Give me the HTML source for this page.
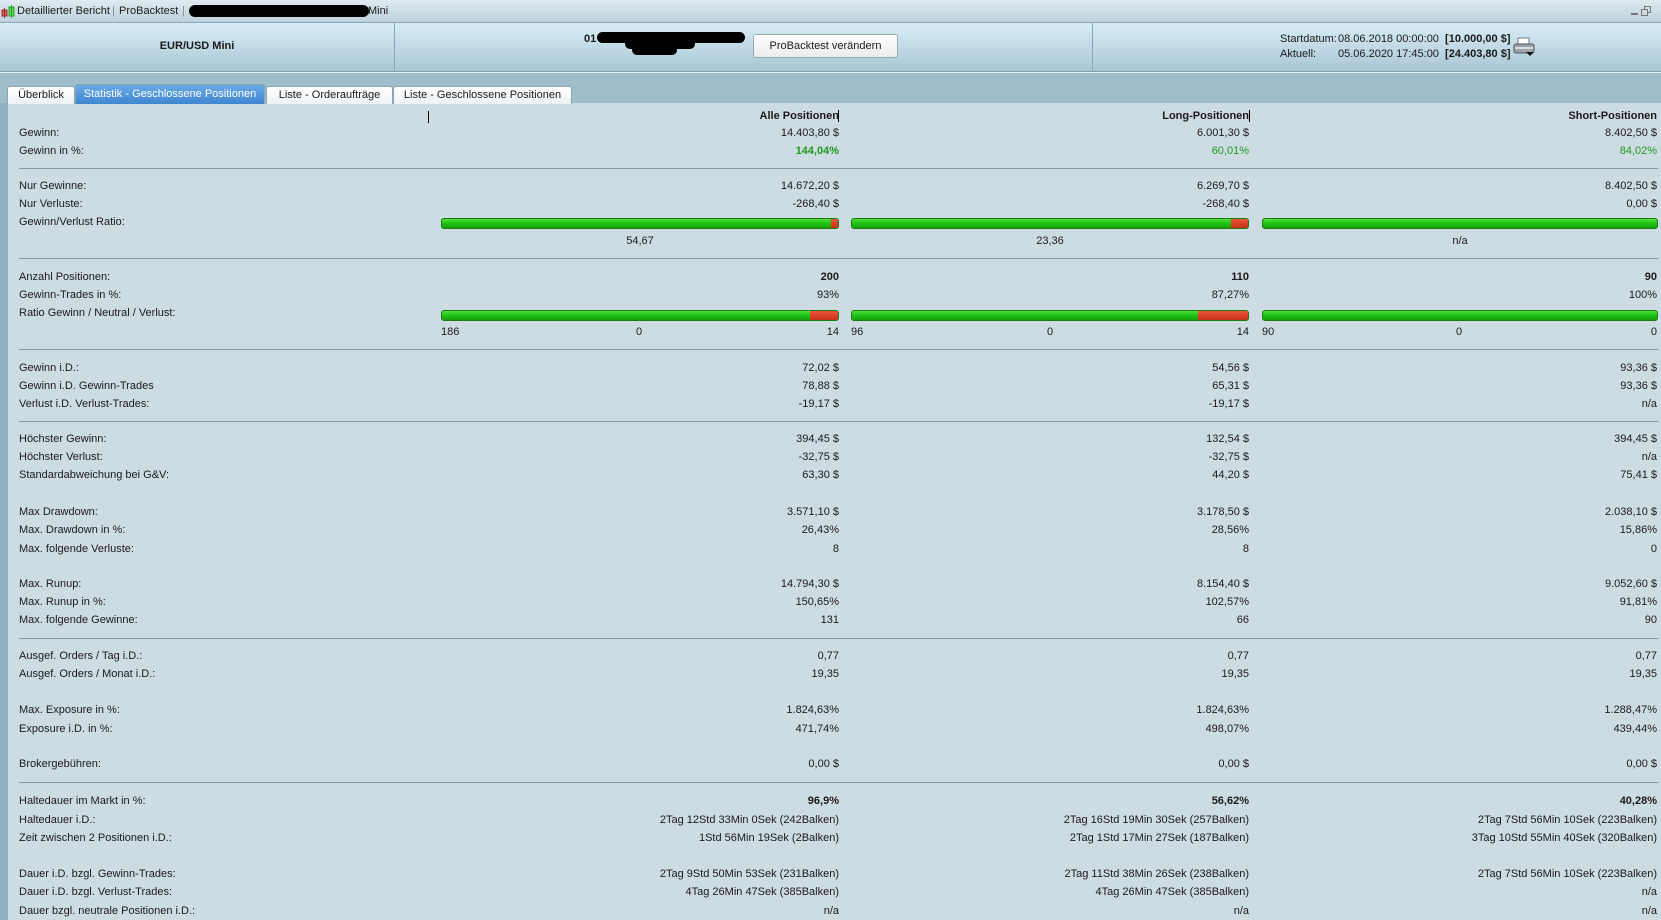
<!DOCTYPE html>
<html><head><meta charset="utf-8">
<style>
*{margin:0;padding:0;box-sizing:border-box}
body{width:1661px;height:920px;overflow:hidden;font-family:"Liberation Sans",Arial,sans-serif;font-size:11px;color:#1a1a1a;background:#cddce3;position:relative}
.abs{position:absolute}
#title{left:0;top:0;width:1661px;height:23px;background:linear-gradient(#dfeaf0,#bcd2dd);border-bottom:1px solid #8aa6b4}
#title span{position:absolute;top:5px;font-size:11px}
#hdr{left:0;top:23px;width:1661px;height:49px;background:linear-gradient(#d8eef8,#a9c6d4);border-bottom:1px solid #7e9eae}
#tabs{left:0;top:72px;width:1661px;height:31px;background:#9fbdcb;border-top:1px solid #e0eef4}
.tab{position:absolute;top:13px;height:18px;background:linear-gradient(#ffffff,#eef2f4);border:1px solid #8aa6b4;border-bottom:none;border-radius:3px 3px 0 0;font-size:11px;text-align:center;line-height:17px}
.tab.sel{background:linear-gradient(#6aaae6,#3f86d0);color:#fff;top:11px;height:20px;line-height:19px}
#lstrip{left:0;top:103px;width:8px;height:817px;background:#8fb0c0}
.r{position:absolute;left:0;width:1661px;height:14px;line-height:14px}
.r span{position:absolute;white-space:nowrap}
.l{left:19px}
.a{right:822px}
.b{right:412px}
.c{right:4px}
.g{color:#1e9a1e}
b{font-weight:bold}
.sep{position:absolute;left:19px;width:1639px;height:1px;background:#8597a2}
.bar{position:absolute;height:11px;border:1px solid #1b7a12;border-radius:3px;background:linear-gradient(#4fe03c,#20c012 50%,#18a00e);overflow:hidden}
.bar i{position:absolute;top:0;right:0;height:100%;background:linear-gradient(#e8553a,#c8301a)}
.btn{left:753px;width:145px;height:24px;background:linear-gradient(#ffffff,#ececec);border:1px solid #9aa;border-radius:3px;text-align:center;line-height:22px;font-size:11px}
</style></head><body>
<div id="title" class="abs">
 <svg class="abs" style="left:1px;top:5px" width="15" height="14"><rect x="1" y="5" width="5" height="6" fill="#e85050" stroke="#933" stroke-width="1"/><line x1="3.5" y1="3" x2="3.5" y2="13" stroke="#933"/><rect x="8" y="2" width="5" height="9" fill="#50e050" stroke="#393" stroke-width="1"/><line x1="10.5" y1="0" x2="10.5" y2="13" stroke="#393"/></svg>
 <span style="left:17px">Detaillierter Bericht</span>
 <span style="left:112px;color:#889">|</span>
 <span style="left:119px">ProBacktest</span>
 <span style="left:182px;color:#889">|</span>
 <div class="abs" style="left:189px;top:5px;width:180px;height:12px;background:#000;border-radius:6px"></div>
 <span style="left:368px">Mini</span>
 <div class="abs" style="left:1631px;top:13px;width:7px;height:2px;background:#777"></div>
 <div class="abs" style="left:1644px;top:6px;width:7px;height:7px;border:1px solid #777"></div>
 <div class="abs" style="left:1641px;top:9px;width:7px;height:7px;border:1px solid #777;background:#cfdfe7"></div>
</div>
<div id="hdr" class="abs">
 <div class="abs" style="left:394px;top:0;width:1px;height:49px;background:#8aa6b4"></div>
 <div class="abs" style="left:1092px;top:0;width:1px;height:49px;background:#8aa6b4"></div>
 <div class="abs" style="left:0;top:17px;width:394px;text-align:center;font-weight:bold">EUR/USD Mini</div>
 <div class="abs" style="left:584px;top:10px;font-weight:bold">01</div>
 <div class="abs" style="left:597px;top:9px;width:148px;height:11px;background:#000;border-radius:6px"></div>
 <div class="abs" style="left:625px;top:16px;width:70px;height:10px;background:#000;border-radius:5px"></div>
 <div class="abs" style="left:632px;top:22px;width:45px;height:10px;background:#000;border-radius:5px"></div>
 <div class="abs btn" style="top:11px">ProBacktest verändern</div>
 <div class="abs" style="left:1280px;top:9px;line-height:15px">Startdatum:<br>Aktuell:</div>
 <div class="abs" style="left:1338px;top:9px;line-height:15px">08.06.2018 00:00:00&nbsp; <b>[10.000,00 $]</b><br>05.06.2020 17:45:00&nbsp; <b>[24.403,80 $]</b></div>
 <svg class="abs" style="left:1513px;top:14px" width="24" height="20"><rect x="5" y="1" width="11" height="7" fill="#fff" stroke="#777"/><rect x="1" y="7" width="20" height="9" rx="2" fill="#9aa4aa" stroke="#555"/><rect x="2" y="10" width="18" height="2" fill="#ddd"/><path d="M13 15 L21 15 L17 19 Z" fill="#111"/></svg>
</div>
<div id="tabs" class="abs">
 <div class="tab" style="left:7px;width:68px">Überblick</div>
 <div class="tab sel" style="left:75px;width:190px">Statistik - Geschlossene Positionen</div>
 <div class="tab" style="left:266px;width:127px">Liste - Orderaufträge</div>
 <div class="tab" style="left:393px;width:179px">Liste - Geschlossene Positionen</div>
</div>
<div id="lstrip" class="abs"></div>

<div class="abs" style="left:428px;top:111px;width:1px;height:12px;background:#000"></div>
<div class="r" style="top:109px"><span class="a" style="right:822px"><b>Alle Positionen</b></span><span style="left:838px;top:1px;width:1px;height:12px;background:#000"></span><span class="b"><b>Long-Positionen</b></span><span style="left:1249px;top:1px;width:1px;height:12px;background:#000"></span><span class="c"><b>Short-Positionen</b></span></div>
<div class="r" style="top:126px"><span class="l">Gewinn:</span><span class="a">14.403,80 $</span><span class="b">6.001,30 $</span><span class="c">8.402,50 $</span></div>
<div class="r" style="top:144px"><span class="l">Gewinn in %:</span><span class="a g"><b>144,04%</b></span><span class="b g">60,01%</span><span class="c g">84,02%</span></div>
<div class="sep" style="top:168px"></div>
<div class="r" style="top:179px"><span class="l">Nur Gewinne:</span><span class="a">14.672,20 $</span><span class="b">6.269,70 $</span><span class="c">8.402,50 $</span></div>
<div class="r" style="top:197px"><span class="l">Nur Verluste:</span><span class="a">-268,40 $</span><span class="b">-268,40 $</span><span class="c">0,00 $</span></div>
<div class="r" style="top:215px"><span class="l">Gewinn/Verlust Ratio:</span></div>
<div class="bar" style="left:441px;top:218px;width:398px"><i style="width:7px"></i></div>
<div class="bar" style="left:851px;top:218px;width:398px"><i style="width:17px"></i></div>
<div class="bar" style="left:1262px;top:218px;width:396px"></div>
<div class="r" style="top:234px"><span style="left:441px;width:398px;text-align:center">54,67</span><span style="left:851px;width:398px;text-align:center">23,36</span><span style="left:1262px;width:396px;text-align:center">n/a</span></div>
<div class="sep" style="top:258px"></div>
<div class="r" style="top:270px"><span class="l">Anzahl Positionen:</span><span class="a"><b>200</b></span><span class="b"><b>110</b></span><span class="c"><b>90</b></span></div>
<div class="r" style="top:288px"><span class="l">Gewinn-Trades in %:</span><span class="a">93%</span><span class="b">87,27%</span><span class="c">100%</span></div>
<div class="r" style="top:306px"><span class="l">Ratio Gewinn / Neutral / Verlust:</span></div>
<div class="bar" style="left:441px;top:310px;width:398px"><i style="width:28px"></i></div>
<div class="bar" style="left:851px;top:310px;width:398px"><i style="width:50px"></i></div>
<div class="bar" style="left:1262px;top:310px;width:396px"></div>
<div class="r" style="top:325px"><span style="left:441px">186</span><span style="left:636px">0</span><span class="a">14</span><span style="left:851px">96</span><span style="left:1047px">0</span><span class="b">14</span><span style="left:1262px">90</span><span style="left:1456px">0</span><span class="c">0</span></div>
<div class="sep" style="top:349px"></div>
<div class="r" style="top:361px"><span class="l">Gewinn i.D.:</span><span class="a">72,02 $</span><span class="b">54,56 $</span><span class="c">93,36 $</span></div>
<div class="r" style="top:379px"><span class="l">Gewinn i.D. Gewinn-Trades</span><span class="a">78,88 $</span><span class="b">65,31 $</span><span class="c">93,36 $</span></div>
<div class="r" style="top:397px"><span class="l">Verlust i.D. Verlust-Trades:</span><span class="a">-19,17 $</span><span class="b">-19,17 $</span><span class="c">n/a</span></div>
<div class="sep" style="top:421px"></div>
<div class="r" style="top:432px"><span class="l">Höchster Gewinn:</span><span class="a">394,45 $</span><span class="b">132,54 $</span><span class="c">394,45 $</span></div>
<div class="r" style="top:450px"><span class="l">Höchster Verlust:</span><span class="a">-32,75 $</span><span class="b">-32,75 $</span><span class="c">n/a</span></div>
<div class="r" style="top:468px"><span class="l">Standardabweichung bei G&amp;V:</span><span class="a">63,30 $</span><span class="b">44,20 $</span><span class="c">75,41 $</span></div>
<div class="r" style="top:505px"><span class="l">Max Drawdown:</span><span class="a">3.571,10 $</span><span class="b">3.178,50 $</span><span class="c">2.038,10 $</span></div>
<div class="r" style="top:523px"><span class="l">Max. Drawdown in %:</span><span class="a">26,43%</span><span class="b">28,56%</span><span class="c">15,86%</span></div>
<div class="r" style="top:542px"><span class="l">Max. folgende Verluste:</span><span class="a">8</span><span class="b">8</span><span class="c">0</span></div>
<div class="r" style="top:577px"><span class="l">Max. Runup:</span><span class="a">14.794,30 $</span><span class="b">8.154,40 $</span><span class="c">9.052,60 $</span></div>
<div class="r" style="top:595px"><span class="l">Max. Runup in %:</span><span class="a">150,65%</span><span class="b">102,57%</span><span class="c">91,81%</span></div>
<div class="r" style="top:613px"><span class="l">Max. folgende Gewinne:</span><span class="a">131</span><span class="b">66</span><span class="c">90</span></div>
<div class="sep" style="top:638px"></div>
<div class="r" style="top:649px"><span class="l">Ausgef. Orders / Tag i.D.:</span><span class="a">0,77</span><span class="b">0,77</span><span class="c">0,77</span></div>
<div class="r" style="top:667px"><span class="l">Ausgef. Orders / Monat i.D.:</span><span class="a">19,35</span><span class="b">19,35</span><span class="c">19,35</span></div>
<div class="r" style="top:703px"><span class="l">Max. Exposure in %:</span><span class="a">1.824,63%</span><span class="b">1.824,63%</span><span class="c">1.288,47%</span></div>
<div class="r" style="top:722px"><span class="l">Exposure i.D. in %:</span><span class="a">471,74%</span><span class="b">498,07%</span><span class="c">439,44%</span></div>
<div class="r" style="top:757px"><span class="l">Brokergebühren:</span><span class="a">0,00 $</span><span class="b">0,00 $</span><span class="c">0,00 $</span></div>
<div class="sep" style="top:782px"></div>
<div class="r" style="top:794px"><span class="l">Haltedauer im Markt in %:</span><span class="a"><b>96,9%</b></span><span class="b"><b>56,62%</b></span><span class="c"><b>40,28%</b></span></div>
<div class="r" style="top:813px"><span class="l">Haltedauer i.D.:</span><span class="a">2Tag 12Std 33Min 0Sek (242Balken)</span><span class="b">2Tag 16Std 19Min 30Sek (257Balken)</span><span class="c">2Tag 7Std 56Min 10Sek (223Balken)</span></div>
<div class="r" style="top:831px"><span class="l">Zeit zwischen 2 Positionen i.D.:</span><span class="a">1Std 56Min 19Sek (2Balken)</span><span class="b">2Tag 1Std 17Min 27Sek (187Balken)</span><span class="c">3Tag 10Std 55Min 40Sek (320Balken)</span></div>
<div class="r" style="top:867px"><span class="l">Dauer i.D. bzgl. Gewinn-Trades:</span><span class="a">2Tag 9Std 50Min 53Sek (231Balken)</span><span class="b">2Tag 11Std 38Min 26Sek (238Balken)</span><span class="c">2Tag 7Std 56Min 10Sek (223Balken)</span></div>
<div class="r" style="top:885px"><span class="l">Dauer i.D. bzgl. Verlust-Trades:</span><span class="a">4Tag 26Min 47Sek (385Balken)</span><span class="b">4Tag 26Min 47Sek (385Balken)</span><span class="c">n/a</span></div>
<div class="r" style="top:904px"><span class="l">Dauer bzgl. neutrale Positionen i.D.:</span><span class="a">n/a</span><span class="b">n/a</span><span class="c">n/a</span></div>
</body></html>
